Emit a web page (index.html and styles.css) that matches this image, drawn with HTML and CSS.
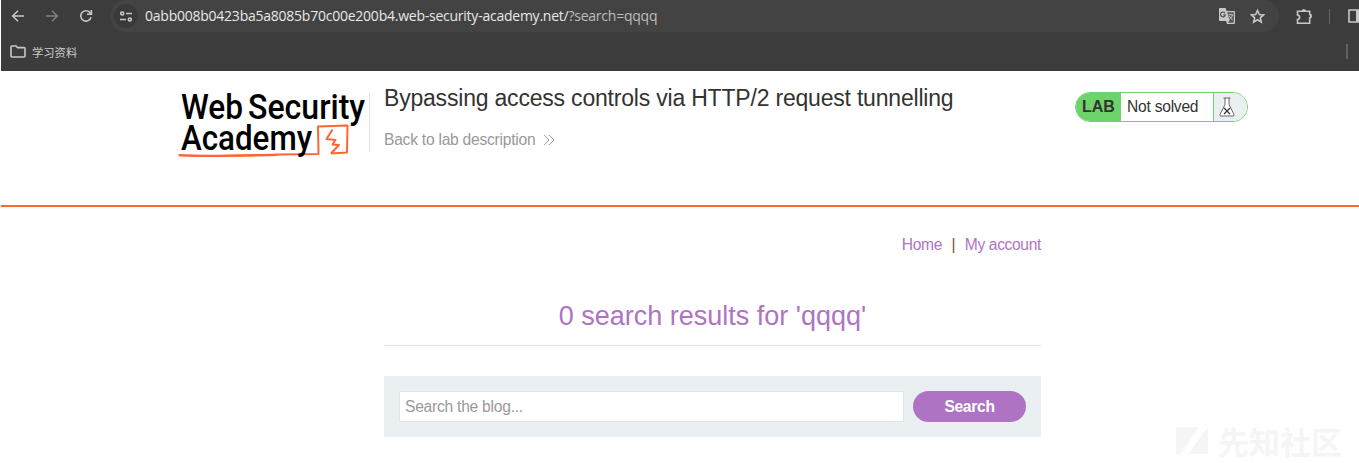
FILE: index.html
```html
<!DOCTYPE html>
<html lang="en">
<head>
<meta charset="utf-8">
<title>Bypassing access controls via HTTP/2 request tunnelling</title>
<link rel="stylesheet" href="styles.css">
</head>
<body>
<div class="browser">
  <div class="toolbar">
    <div class="nav-icons">
      <svg width="14" height="14" viewBox="0 0 14 14"><path d="M13 7H2M7 1.7 1.7 7 7 12.3" class="line"/></svg>
      <svg width="14" height="14" viewBox="0 0 14 14" class="dim"><path d="M1 7h11M7 1.7 12.3 7 7 12.3" class="line"/></svg>
      <svg width="14" height="14" viewBox="0 0 14 14"><path d="M12 8.2A5.2 5.2 0 1 1 10.8 3.4L12.2 5M12.4 1v4.3H8" class="line"/></svg>
    </div>
    <div class="address">
      <span class="site-info"><svg width="12" height="11" viewBox="0 0 12 11"><path d="M6 2.5h6M0 8.5h6" class="line"/><circle cx="2.2" cy="2.5" r="1.5" class="line"/><circle cx="9.8" cy="8.5" r="1.5" class="line"/></svg></span>
      <span class="url">0abb008b0423ba5a8085b70c00e200b4.web-security-academy.net/<span class="query">?search=qqqq</span></span>
      <svg class="translate" width="16" height="16" viewBox="0 0 16 16"><path d="M1 0h5.5l1.2 3H15a1 1 0 0 1 1 1v11a1 1 0 0 1-1 1H8l-1-3H1a1 1 0 0 1-1-1V1a1 1 0 0 1 1-1z" fill="#c7c7c7"/><path d="M8.3 4.2H14.8v10.5H9l1.5-2.2z" fill="#555"/><path d="M6 5.2A2.4 2.4 0 1 0 6.3 7H4.2" fill="none" stroke="#444" stroke-width="1.1"/><path d="M9.5 6.8h4.6M11.8 5.8v1M13.4 7c-.6 2-1.8 3.5-3.2 4.5M10.3 8c.8 1.7 2 3 3.3 3.8" fill="none" stroke="#c7c7c7"/></svg>
      <svg class="star" width="15" height="15" viewBox="0 0 15 15"><path d="m7.5 1.5 1.8 4 4.3.4-3.3 2.9 1 4.3-3.8-2.3-3.8 2.3 1-4.3L1.4 5.9l4.3-.4z" class="line"/></svg>
    </div>
    <svg class="puzzle" width="17" height="17" viewBox="0 0 17 17"><path d="M1.5 3.2h12.2v3.2c2.1 0 2.1 3.4 0 3.4v5.5H1.5v-3.8c2.8-.3 2.8-4.2 0-4.5z" class="line"/><path d="M5.8 3a2 2 0 0 1 4 0zM14 6.3a2 2 0 0 1 0 3.6z" fill="#c7c7c7"/></svg>
    <span class="divider"></span>
    <svg class="panel" width="12" height="14" viewBox="0 0 12 14"><path d="M12 1H1v12h11" class="line"/><path d="M8 1h4v12H8z" fill="#c7c7c7"/></svg>
  </div>
  <div class="bookmarks">
    <svg width="16" height="13" viewBox="0 0 16 13"><path d="M1 11V2a1 1 0 0 1 1-1h4l1.6 1.6H14a1 1 0 0 1 1 1V11a1 1 0 0 1-1 1H2a1 1 0 0 1-1-1z" class="line"/></svg>
    <span class="folder-name">学习资料</span>
    <span class="book-end"></span>
  </div>
</div>
<header class="lab-header">
  <svg class="logo" width="190" height="72" viewBox="0 0 190 72">
    <g class="logo-text">
      <text x="2" y="28" textLength="62" lengthAdjust="spacingAndGlyphs">Web</text>
      <text x="69" y="28" textLength="117" lengthAdjust="spacingAndGlyphs">Security</text>
    </g>
    <g fill="none" stroke="#ff6633" stroke-linejoin="round">
      <path d="M-.5 64.3C42 66 92 63 139.500 63L139 35.500 168.500 34.500 168 61.500 152 62.500" stroke-width="2"/>
      <path d="M0 64C28 66 58 65 98 64" stroke-width="2"/>
      <path d="M153.500 38.500 147.500 48 156.500 49 153.500 53.500 160 54 152 62.500" stroke-width="2"/>
    </g>
    <text class="logo-text" x="2" y="59" textLength="131" lengthAdjust="spacingAndGlyphs">Academy</text>
  </svg>
  <div class="title-block">
    <h2>Bypassing access controls via HTTP/2 request tunnelling</h2>
    <a class="back"><span>Back to lab description</span><svg width="12" height="12" viewBox="0 0 12 12"><path d="M1 .8 6 6 1 11.200M6 .8 11 6 6 11.200" fill="none" stroke="#999"/></svg></a>
  </div>
  <div class="status">
    <span class="lab">LAB</span><span class="state">Not solved</span>
    <span class="flask"><svg width="16" height="20" viewBox="0 0 16 20"><path d="M4.500 1h7M6 1v6.500L1 17.500q-.5 1.500 1 1.500h12q1.500 0 1-1.500L10 7.500V1" fill="#fff" stroke="#666"/><path d="m5 11 6 6m0-6-6 6" fill="none" stroke="#333" stroke-width="1.200"/></svg></span>
  </div>
</header>
<main class="content">
  <nav class="links"><a>Home</a><span>|</span><a>My account</a></nav>
  <h1>0 search results for 'qqqq'</h1>
  <form class="search">
    <input type="text" placeholder="Search the blog...">
    <button type="button">Search</button>
  </form>
</main>
<div class="watermark">
  <svg width="34" height="41" viewBox="0 0 34 41"><path d="M0 7h23L2 35H0zM32 0v34H12L32 7zM33 0 0 41 12 22z" fill="#f5f5f5"/><path d="M23 7 5 35h7L29 7z" fill="#fff"/></svg>
  <span>先知社区</span>
</div>
</body>
</html>
```
FILE: styles.css
```css
* { box-sizing: border-box; }
body { margin: 0; height: 463px; overflow: hidden; background: #fff; color: #333332; font: 15.6px/18px "Liberation Sans", Arial, sans-serif; letter-spacing: -.24px; }
svg { display: block; flex: none; }
.browser { height: 71px; margin-left: 1px; background: #3c3c3c; overflow: hidden; letter-spacing: 0; }
.line { fill: none; stroke: #c7c7c7; stroke-width: 1.6; }
.dim { opacity: .5; }
.toolbar { display: flex; align-items: center; height: 32px; }
.nav-icons { display: flex; gap: 20px; flex: none; width: 109px; padding-left: 10px; }
.address { display: flex; align-items: center; width: 1169px; height: 32px; padding-left: 4px; background: #434343; border-radius: 16px; flex: none; }
.site-info { display: flex; align-items: center; justify-content: center; flex: none; width: 24px; height: 24px; border-radius: 50%; background: #3a3a3a; }
.url { flex: none; width: 1081px; padding-left: 7px; color: #e8e8e8; font: 14px/20px "Open Sans", "Noto Sans", sans-serif; letter-spacing: -.24px; white-space: nowrap; }
.query { color: #bdbdbd; }
.star { margin-left: 15px; }
.puzzle { margin-left: 17px; }
.divider { width: 1px; height: 15px; margin: 0 18px 0 16px; background: #666; flex: none; }
.bookmarks { display: flex; align-items: center; height: 39px; padding: 0 11px 0 9px; }
.folder-name { margin-left: 6px; color: #ccc; font: 11.3px/16px "Noto Sans CJK SC", sans-serif; }
.book-end { width: 2px; height: 15px; margin-left: auto; background: #606060; }
.lab-header { display: flex; align-items: flex-start; height: 136px; margin-left: 1px; padding-left: 178px; border-bottom: 2px solid #ff6633; }
.logo { margin-top: 20px; overflow: visible; letter-spacing: 0; }
.logo-text { font: 500 35px Roboto, sans-serif; fill: #000; }
.title-block { height: 59px; margin-top: 22px; padding-left: 14px; border-left: 1px solid #e2e2e2; width: 706px; }
h2 { margin: -9px 0 0; font-size: 23px; line-height: 28px; letter-spacing: -.2px; font-weight: 400; white-space: nowrap; }
.back { display: flex; align-items: center; gap: 8px; margin-top: 19px; color: #999; }
.status { display: flex; width: 173px; height: 30px; margin-top: 21px; border: 1px solid #72d26e; border-radius: 15px; overflow: hidden; line-height: 28px; }
.lab { width: 45px; padding-left: 6px; background: #6fd36c; font-size: 16px; font-weight: 700; letter-spacing: -.1px; }
.state { width: 92px; padding-left: 6px; }
.flask { display: flex; align-items: center; flex: 1; padding-left: 5px; border-left: 1px solid #72d26e; background: #eaeff2; }
.content { width: 657px; margin-left: 384px; padding-top: 29px; }
.links { display: flex; justify-content: flex-end; gap: 9.5px; color: #ae74c3; letter-spacing: -.35px; }
.links span { color: #7b4930; }
h1 { height: 62px; margin: 30px 0; padding-top: 16px; border-bottom: 1px solid #e0e3e5; color: #ae74c3; font-size: 27px; line-height: 32px; letter-spacing: 0; font-weight: 400; text-align: center; }
.search { display: flex; height: 61px; padding: 15px; gap: 9px; background: #eaeff2; }
input { width: 505px; height: 31px; padding: 0 5px; border: 1px solid #e0e5e8; background: #fff; font: inherit; letter-spacing: inherit; outline: 0; }
input::placeholder { color: #999; opacity: 1; }
button { width: 113px; height: 31px; padding: 0; border: 0; border-radius: 16px; background: #ae74c3; color: #fff; font: 700 15.6px "Liberation Sans", Arial, sans-serif; letter-spacing: -.3px; }
.watermark { position: absolute; left: 1176px; top: 420px; display: flex; gap: 8px; color: #f5f5f5; font: 700 31px/41px "Noto Sans CJK SC", sans-serif; letter-spacing: 0; white-space: nowrap; }
```
